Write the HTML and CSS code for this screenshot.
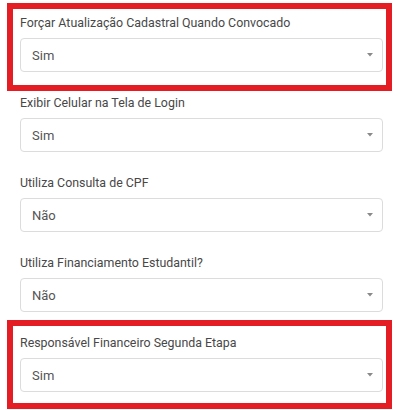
FILE: index.html
```html
<!DOCTYPE html>
<html lang="pt-BR">
<head>
<meta charset="utf-8">
<title>Configurações</title>
<link rel="stylesheet" href="styles.css">
</head>
<body>
<div class="form">
  <div class="group mark mark-first">
    <label class="label">Forçar Atualização Cadastral Quando Convocado</label>
    <div class="select"><span class="value">Sim</span><svg class="caret" width="6" height="4" viewBox="0 0 6 4"><path d="M0 0h6L3 3.5z" fill="#8a8a8a"/></svg></div>
  </div>
  <div class="group">
    <label class="label">Exibir Celular na Tela de Login</label>
    <div class="select"><span class="value">Sim</span><svg class="caret" width="6" height="4" viewBox="0 0 6 4"><path d="M0 0h6L3 3.5z" fill="#8a8a8a"/></svg></div>
  </div>
  <div class="group">
    <label class="label">Utiliza Consulta de CPF</label>
    <div class="select"><span class="value">Não</span><svg class="caret" width="6" height="4" viewBox="0 0 6 4"><path d="M0 0h6L3 3.5z" fill="#8a8a8a"/></svg></div>
  </div>
  <div class="group">
    <label class="label">Utiliza Financiamento Estudantil?</label>
    <div class="select"><span class="value">Não</span><svg class="caret" width="6" height="4" viewBox="0 0 6 4"><path d="M0 0h6L3 3.5z" fill="#8a8a8a"/></svg></div>
  </div>
  <div class="group mark mark-last">
    <label class="label">Responsável Financeiro Segunda Etapa</label>
    <div class="select"><span class="value">Sim</span><svg class="caret" width="6" height="4" viewBox="0 0 6 4"><path d="M0 0h6L3 3.5z" fill="#8a8a8a"/></svg></div>
  </div>
</div>
</body>
</html>
```

FILE: styles.css
```css
html, body {
  margin: 0;
  padding: 0;
  background: #ffffff;
}

body {
  font-family: Roboto, "Noto Sans", "Liberation Sans", sans-serif;
  color: #4a4a4a;
}

.form {
  width: 363px;
  padding: 13px 0 18px 20px;
  display: flex;
  flex-direction: column;
  gap: 21px;
}

.group {
  display: flex;
  flex-direction: column;
  gap: 5px;
}

.label {
  font-size: 12.4px;
  line-height: 20px;
  color: #484848;
}

.select {
  box-sizing: border-box;
  height: 34px;
  border: 1px solid #dcdcdc;
  border-radius: 4px;
  padding: 0 9px 0 11px;
  display: flex;
  align-items: center;
  justify-content: space-between;
  font-size: 13px;
  color: #555555;
}

.caret {
  display: block;
}

.mark {
  position: relative;
}

.mark::before {
  content: "";
  position: absolute;
  border: 6px solid #e31d23;
  pointer-events: none;
}

.mark-first::before {
  left: -13px;
  right: -9px;
  top: -10px;
  bottom: -19px;
}

.mark-last::before {
  left: -13px;
  right: -9px;
  top: -13px;
  bottom: -17px;
}
```
